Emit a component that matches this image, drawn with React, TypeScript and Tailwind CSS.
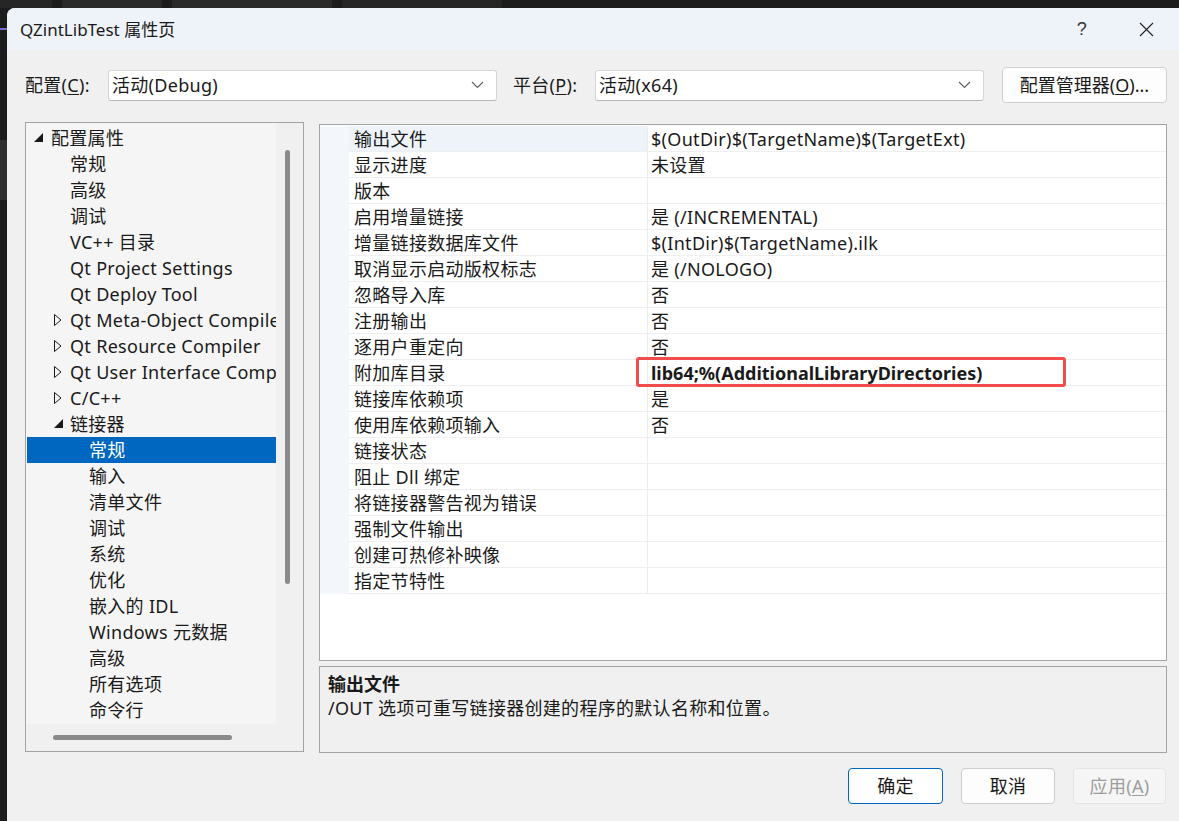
import React from "react";

type TreeItem = { t: string; lvl: 0 | 1 | 2; tri?: "open" | "closed"; sel?: boolean };

const tree: TreeItem[] = [
  { t: "配置属性", lvl: 0, tri: "open" },
  { t: "常规", lvl: 1 },
  { t: "高级", lvl: 1 },
  { t: "调试", lvl: 1 },
  { t: "VC++ 目录", lvl: 1 },
  { t: "Qt Project Settings", lvl: 1 },
  { t: "Qt Deploy Tool", lvl: 1 },
  { t: "Qt Meta-Object Compiler", lvl: 1, tri: "closed" },
  { t: "Qt Resource Compiler", lvl: 1, tri: "closed" },
  { t: "Qt User Interface Compiler", lvl: 1, tri: "closed" },
  { t: "C/C++", lvl: 1, tri: "closed" },
  { t: "链接器", lvl: 1, tri: "open" },
  { t: "常规", lvl: 2, sel: true },
  { t: "输入", lvl: 2 },
  { t: "清单文件", lvl: 2 },
  { t: "调试", lvl: 2 },
  { t: "系统", lvl: 2 },
  { t: "优化", lvl: 2 },
  { t: "嵌入的 IDL", lvl: 2 },
  { t: "Windows 元数据", lvl: 2 },
  { t: "高级", lvl: 2 },
  { t: "所有选项", lvl: 2 },
  { t: "命令行", lvl: 2 },
];

const rows: { n: string; v: string; bold?: boolean }[] = [
  { n: "输出文件", v: "$(OutDir)$(TargetName)$(TargetExt)" },
  { n: "显示进度", v: "未设置" },
  { n: "版本", v: "" },
  { n: "启用增量链接", v: "是 (/INCREMENTAL)" },
  { n: "增量链接数据库文件", v: "$(IntDir)$(TargetName).ilk" },
  { n: "取消显示启动版权标志", v: "是 (/NOLOGO)" },
  { n: "忽略导入库", v: "否" },
  { n: "注册输出", v: "否" },
  { n: "逐用户重定向", v: "否" },
  { n: "附加库目录", v: "lib64;%(AdditionalLibraryDirectories)", bold: true },
  { n: "链接库依赖项", v: "是" },
  { n: "使用库依赖项输入", v: "否" },
  { n: "链接状态", v: "" },
  { n: "阻止 Dll 绑定", v: "" },
  { n: "将链接器警告视为错误", v: "" },
  { n: "强制文件输出", v: "" },
  { n: "创建可热修补映像", v: "" },
  { n: "指定节特性", v: "" },
];

function OpenTri() {
  return (
    <svg width="9" height="9" viewBox="0 0 9 9" className="mt-[-1px] shrink-0">
      <polygon points="9,0 9,9 0,9" fill="#1a1a1a" />
    </svg>
  );
}

function ClosedTri() {
  return (
    <svg width="8" height="12" viewBox="0 0 8 12" className="shrink-0">
      <polygon points="0.5,0.5 7,6 0.5,11.5" fill="none" stroke="#1a1a1a" strokeWidth="1" />
    </svg>
  );
}

function Chevron() {
  return (
    <svg width="13" height="8" viewBox="0 0 13 8" className="shrink-0">
      <polyline points="1,1 6.5,6.5 12,1" fill="none" stroke="#5f5f5f" strokeWidth="1.1" />
    </svg>
  );
}

function Combo({ text }: { text: string }) {
  return (
    <div className="w-[389px] h-[31px] bg-white border border-[#d5d5d5] border-b-[#b8b8b8] rounded-[3px] flex items-center pl-[3px] pr-[12px] shrink-0">
      <span className="flex-1 leading-none">{text}</span>
      <Chevron />
    </div>
  );
}

export default function App() {
  return (
    <div className="w-[1179px] h-[821px] overflow-hidden bg-[#1c1c1c] flex flex-col font-['Noto_Sans','Noto_Sans_CJK_SC',sans-serif] text-[#1a1a1a] text-[18px] tracking-[0.3px]">
      {/* top dark strip */}
      <div className="h-[8px] flex shrink-0">
        <div className="w-[52px] bg-[#262626]" />
        <div className="w-[10px]" />
        <div className="w-[100px] bg-[#2a2a2a]" />
        <div className="w-[10px]" />
        <div className="w-[160px] bg-[#2a2a2a]" />
        <div className="w-[10px]" />
        <div className="w-[160px] bg-[#262626]" />
      </div>
      <div className="flex flex-1 min-h-0">
        {/* left dark strip */}
        <div className="w-[7px] flex flex-col shrink-0">
          <div className="h-[20px]" />
          <div className="h-[2px] bg-[#7b6cd9]" />
          <div className="h-[110px]" />
          <div className="h-[60px] bg-[#2e2e2e]" />
        </div>
        {/* dialog */}
        <div className="flex-1 rounded-tl-[8px] bg-[#f0f0f0] flex flex-col overflow-hidden">
          {/* title bar */}
          <div className="h-[42px] bg-[#eef2f9] flex items-center pl-[13px] shrink-0">
            <span className="text-[17px] leading-none tracking-normal">QZintLibTest 属性页</span>
            <span className="ml-auto text-[18px] leading-none text-[#333] mr-[52px] font-['Liberation_Sans',sans-serif]">?</span>
            <svg width="15" height="15" viewBox="0 0 15 15" className="mr-[25px]">
              <path d="M1 1 L14 14 M14 1 L1 14" stroke="#222" strokeWidth="1.1" />
            </svg>
          </div>

          {/* config row */}
          <div className="mt-[17px] h-[36px] flex items-center pl-[18px] shrink-0">
            <span className="w-[83px] leading-none shrink-0">
              配置(<span className="underline underline-offset-2">C</span>):
            </span>
            <Combo text="活动(Debug)" />
            <span className="ml-[16px] w-[82px] leading-none shrink-0">
              平台(<span className="underline underline-offset-2">P</span>):
            </span>
            <Combo text="活动(x64)" />
            <div className="ml-[18px] w-[165px] h-[36px] bg-[#fdfdfd] border border-[#d0d0d0] rounded-[4px] flex items-center justify-center leading-none shrink-0 tracking-normal">
              配置管理器(<span className="underline underline-offset-2">O</span>)...
            </div>
          </div>

          {/* main area */}
          <div className="mt-[19px] flex pl-[18px] shrink-0">
            {/* tree panel */}
            <div className="w-[279px] h-[630px] border border-[#a3a3a3] flex flex-col bg-[#f0f0f0] shrink-0">
              <div className="flex h-[601px]">
                <div className="w-[250px] bg-[#f5f5f5] pt-[2px] overflow-hidden shrink-0">
                  {tree.map((it, i) => (
                    <div
                      key={i}
                      className={
                        "h-[26px] flex items-center whitespace-nowrap ml-[1px] " +
                        (it.sel ? "bg-[#0067c0] text-white " : "") +
                        (it.lvl === 0 ? "pl-[7px]" : it.lvl === 1 ? "pl-[27px]" : "pl-[62px]")
                      }
                    >
                      {it.lvl === 0 && (
                        <span className="w-[17px] flex items-center shrink-0">
                          <OpenTri />
                        </span>
                      )}
                      {it.lvl === 1 && (
                        <span className="w-[16px] flex items-center shrink-0">
                          {it.tri === "open" ? <OpenTri /> : it.tri === "closed" ? <ClosedTri /> : null}
                        </span>
                      )}
                      <span className="leading-none shrink-0">{it.t}</span>
                    </div>
                  ))}
                </div>
                <div className="w-[27px] pt-[27px] pl-[9px] shrink-0">
                  <div className="w-[5px] h-[434px] rounded-full bg-[#8a8a8a]" />
                </div>
              </div>
              <div className="h-[27px] pl-[27px] pt-[11px]">
                <div className="w-[179px] h-[5px] rounded-full bg-[#8a8a8a]" />
              </div>
            </div>

            {/* right column */}
            <div className="ml-[15px] w-[848px] flex flex-col shrink-0">
              <div className="mt-[2px] h-[537px] border border-[#a3a3a3] bg-white pt-[1px]">
                {rows.map((r, i) => (
                  <div key={i} className="h-[26px] flex">
                    <div className="w-[29px] bg-[#f3f6fb] shrink-0" />
                    <div
                      className={
                        "w-[298px] shrink-0 border-b border-[#efefef] pl-[5px] flex items-center whitespace-nowrap " +
                        (i === 0 ? "bg-[#eef3fa]" : "")
                      }
                    >
                      <span className="leading-none">{r.n}</span>
                    </div>
                    <div className="w-px bg-[#ececec] shrink-0" />
                    <div className="flex-1 border-b border-[#efefef] pl-[3px] flex items-center whitespace-nowrap relative">
                      <span className={"leading-none " + (r.bold ? "font-bold tracking-normal" : "")}>{r.v}</span>
                      {r.bold && (
                        <div className="absolute left-[-12px] top-[-3px] w-[430px] h-[30px] border-[3px] border-[#f14c4c] rounded-[3px]" />
                      )}
                    </div>
                  </div>
                ))}
              </div>
              <div className="mt-[5px] h-[87px] border border-[#a3a3a3] bg-[#f0f0f0] pl-[8px] pt-[6px]">
                <div className="h-[22px] flex items-center font-bold leading-none tracking-normal">输出文件</div>
                <div className="h-[26px] flex items-center leading-none">/OUT 选项可重写链接器创建的程序的默认名称和位置。</div>
              </div>
            </div>
          </div>

          {/* buttons */}
          <div className="mt-[15px] flex justify-end pr-[13px] gap-[18px] shrink-0">
            <div className="w-[95px] h-[36px] bg-white border border-[#0067c0] rounded-[4px] flex items-center justify-center leading-none">
              确定
            </div>
            <div className="w-[94px] h-[36px] bg-[#fdfdfd] border border-[#cccccc] rounded-[4px] flex items-center justify-center leading-none">
              取消
            </div>
            <div className="w-[93px] h-[36px] bg-[#f5f5f5] border border-[#e5e5e5] rounded-[4px] flex items-center justify-center leading-none text-[#9d9d9d]">
              应用(<span className="underline underline-offset-2">A</span>)
            </div>
          </div>
        </div>
      </div>
    </div>
  );
}
